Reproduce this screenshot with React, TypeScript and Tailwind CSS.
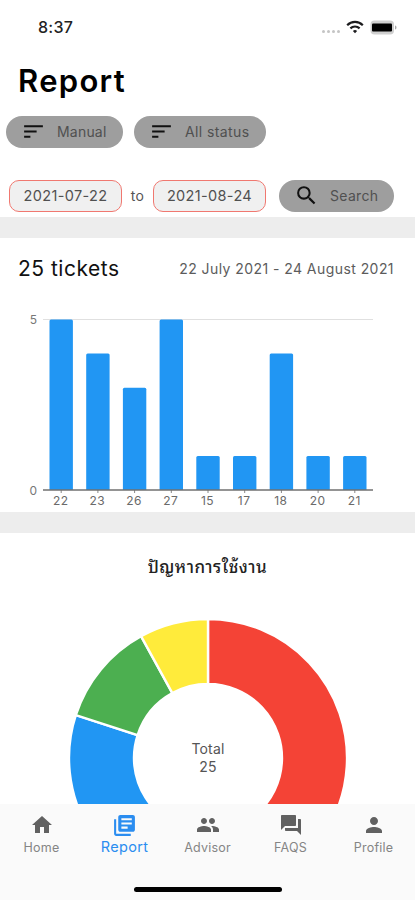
import React from 'react';
import { MdForum, MdHome, MdLibraryBooks, MdPeople, MdPerson, MdSearch, MdSort } from 'react-icons/md';
import { clsx } from 'clsx';

interface Bar {
  day: string;
  count: number;
}

const bars: Bar[] = [
  { day: '22', count: 5 },
  { day: '23', count: 4 },
  { day: '26', count: 3 },
  { day: '27', count: 5 },
  { day: '15', count: 1 },
  { day: '17', count: 1 },
  { day: '18', count: 4 },
  { day: '20', count: 1 },
  { day: '21', count: 1 },
];

const slices = [
  { value: 13, color: '#f44336' },
  { value: 7, color: '#2196f3' },
  { value: 3, color: '#4caf50' },
  { value: 2, color: '#ffeb3b' },
];

const StatusBar: React.FC = () => (
  <div className="flex h-[54px] shrink-0 items-center justify-between pl-[38px] pr-[18px]">
    <span className="text-[16px] font-medium tracking-[0.3px] text-[#222]">8:37</span>
    <div className="flex items-center">
      <div className="mr-[6px] mt-[9px] flex gap-[2px]">
        {[0, 1, 2, 3].map(i => (
          <span key={i} className="size-[3px] rounded-full bg-[#c4c4c4]" />
        ))}
      </div>
      <svg width="18" height="14" viewBox="0 0 18 14" fill="none" stroke="#1c1c1e" strokeWidth="2.2">
        <path d="M1.2 5.2a11 11 0 0 1 15.6 0" />
        <path d="M4.4 8.4a6.5 6.5 0 0 1 9.2 0" />
        <path d="M9 13.2 6.9 11a3 3 0 0 1 4.2 0Z" fill="#1c1c1e" stroke="none" />
      </svg>
      <svg className="ml-[6px]" width="27" height="15" viewBox="0 0 27 15">
        <rect x="0.5" y="0.5" width="23.5" height="14" rx="4" fill="#cfcfcf" />
        <rect x="2" y="3.5" width="20" height="8" rx="1" fill="#000" />
        <path d="M25 5.5c2 .6 2 3.400 0 4z" fill="#aaa" />
      </svg>
    </div>
  </div>
);

const PillButton: React.FC<{ icon: React.ReactNode; label: string; className: string }> = ({
  icon,
  label,
  className,
}) => (
  <button className={clsx('flex h-8 items-center rounded-full bg-[#9e9e9e] text-[14px] text-[#505050]', className)}>
    <span className="text-[#111]">{icon}</span>
    <span className="whitespace-nowrap">{label}</span>
  </button>
);

const DateField: React.FC<{ value: string }> = ({ value }) => (
  <div className="flex h-8 w-[113px] items-center justify-center rounded-[10px] border border-[#f07870] bg-[#f0f0f0] text-[14.500px] tracking-[0.35px] text-[#505050]">
    {value}
  </div>
);

const BarChart: React.FC = () => (
  <svg className="block" width="415" height="212" viewBox="0 299 415 212">
    <path d="M43 319.500H373" stroke="#e0e0e0" />
    {bars.map((bar, i) => {
      const x = 61.2 + i * 36.7;
      const h = bar.count * 34.1;
      return (
        <g key={bar.day}>
          <path
            d={`M${x - 11.7} 490v${-(h - 1.5)}q0-1.500 1.500-1.500h20.400q1.500 0 1.500 1.500v${h - 1.5}z`}
            fill="#2196f3"
          />
          <path d={`M${x} 490v3`} stroke="#888" />
          <text x={x - 0.5} y="505" textAnchor="middle" fontSize="12" letterSpacing="0.5" fill="#6a6a6a">
            {bar.day}
          </text>
        </g>
      );
    })}
    <path d="M43 490H373" stroke="#707070" strokeWidth="1.3" />
    <text x="37" y="324" textAnchor="end" fontSize="12" fill="#777">5</text>
    <text x="37" y="494.500" textAnchor="end" fontSize="12" fill="#777">0</text>
  </svg>
);

const DonutChart: React.FC = () => {
  const total = slices.reduce((sum, s) => sum + s.value, 0);
  const point = (r: number, share: number) => {
    const a = share * 2 * Math.PI;
    return `${(139 + r * Math.sin(a)).toFixed(2)} ${(139 - r * Math.cos(a)).toFixed(2)}`;
  };
  let start = 0;

  return (
    <svg className="mx-auto block" width="278" height="278" viewBox="0 0 278 278">
      {slices.map(slice => {
        const from = start / total;
        start += slice.value;
        const to = start / total;
        const large = to - from > 0.5 ? 1 : 0;
        return (
          <path
            key={slice.color}
            d={`M${point(139, from)}A139 139 0 ${large} 1 ${point(139, to)}L${point(74, to)}A74 74 0 ${large} 0 ${point(74, from)}Z`}
            fill={slice.color}
            stroke="#fff"
            strokeWidth="2.4"
          />
        );
      })}
      <text x="139" y="134.500" textAnchor="middle" fontSize="14" letterSpacing="0.2" fill="#555">Total</text>
      <text x="139" y="152.500" textAnchor="middle" fontSize="14" letterSpacing="0.2" fill="#555">{total}</text>
    </svg>
  );
};

const tabs = [
  { label: 'Home', Icon: MdHome },
  { label: 'Report', Icon: MdLibraryBooks, active: true },
  { label: 'Advisor', Icon: MdPeople },
  { label: 'FAQS', Icon: MdForum },
  { label: 'Profile', Icon: MdPerson },
];

const BottomNav: React.FC = () => (
  <nav className="flex h-24 shrink-0 flex-col bg-[#fafafa]">
    <div className="grid h-[83px] grid-cols-5">
      {tabs.map(({ label, Icon, active }) => (
        <div
          key={label}
          className={clsx('flex flex-col items-center pt-[9px]', active ? 'text-[#2b8df0]' : 'text-[#616161]')}
        >
          <Icon size={active ? 25 : 24} />
          <span
            className={clsx(
              active
                ? 'text-[14.500px] leading-[18px] tracking-[0.35px]'
                : 'pt-[2px] text-[12.500px] leading-[18px] tracking-[0.2px] text-[#858585]'
            )}
          >
            {label}
          </span>
        </div>
      ))}
    </div>
    <div className="mx-auto h-[5px] w-[148px] rounded-full bg-black" />
  </nav>
);

export default function App() {
  return (
    <div className="flex h-[900px] w-[415px] flex-col overflow-hidden bg-white font-['Inter','Noto_Sans',sans-serif]">
      <StatusBar />
      <main className="min-h-0 flex-1 overflow-hidden">
        <h1 className="pl-[18px] text-[31px] font-semibold leading-[54px] tracking-[1.3px] text-black">Report</h1>

        {/* Filters */}
        <div className="flex gap-[11px] pl-[6px] pt-[7.500px]">
          <PillButton icon={<MdSort size={25} />} label="Manual" className="w-[117px] gap-[11px] pl-[15px] tracking-[0.2px]" />
          <PillButton icon={<MdSort size={25} />} label="All status" className="w-[132px] gap-[11px] pl-[15px] tracking-[0.4px]" />
        </div>
        <div className="flex items-center pl-[9px] pt-8">
          <DateField value="2021-07-22" />
          <span className="w-[31px] text-center text-[14px] tracking-[0.3px] text-[#555]">to</span>
          <DateField value="2021-08-24" />
          <PillButton icon={<MdSearch size={25} />} label="Search" className="ml-[13px] w-[115px] gap-[11px] pl-[15px] tracking-[0.3px]" />
        </div>
        <div className="mt-[5.500px] h-[21px] bg-[#ededed]" />

        {/* Tickets per day */}
        <div className="flex h-[61px] items-center justify-between pl-[18px] pr-[21px]">
          <h2 className="text-[21px] tracking-[0.5px] text-[#111]">25 tickets</h2>
          <span className="text-[14px] tracking-[0.44px] text-[#5c5c5c]">22 July 2021 - 24 August 2021</span>
        </div>
        <BarChart />
        <div className="mt-px h-[21px] bg-[#ededed]" />

        {/* Tickets by problem */}
        <h3 className="pt-[21px] text-center font-['Noto_Sans_Thai_Looped','Noto_Looped_Thai','Loma','Garuda','Noto_Serif_Thai','Noto_Sans_Thai',sans-serif] text-[17px] font-medium leading-6 tracking-[0.5px] text-[#222]">
          ปัญหาการใช้งาน
        </h3>
        <div className="pt-[41px]">
          <DonutChart />
        </div>
      </main>
      <BottomNav />
    </div>
  );
}
